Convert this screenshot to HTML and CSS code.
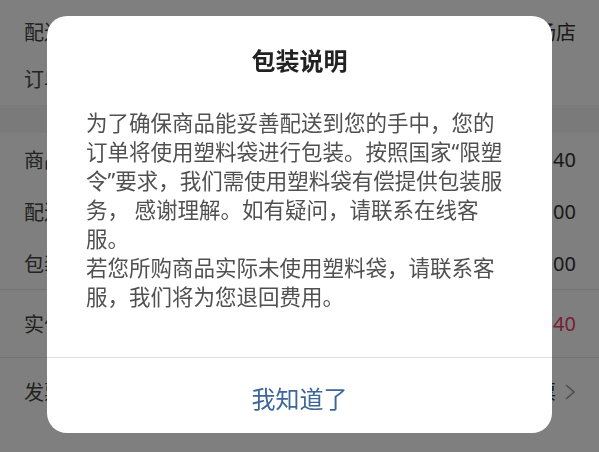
FILE: index.html
```html
<!DOCTYPE html>
<html lang="zh-CN">
<head>
<meta charset="utf-8">
<title>包装说明</title>
<link rel="stylesheet" href="styles.css">
</head>
<body>
<div class="page">
  <section class="group group-top">
    <div class="row"><span class="label">配送门店</span><span class="value">永辉超市万达广场店</span></div>
    <div class="row"><span class="label">订单编号</span><span class="value"></span></div>
  </section>
  <div class="band"></div>
  <section class="group">
    <div class="row row-mid"><span class="label">商品金额</span><span class="value">¥32.40</span></div>
    <div class="row row-mid"><span class="label">配送费</span><span class="value">¥5.00</span></div>
    <div class="row row-mid"><span class="label">包装费</span><span class="value">¥1.00</span></div>
    <div class="row row-big sep"><span class="label">实付金额</span><span class="value red">¥38.40</span></div>
    <div class="row row-big sep"><span class="label">发票信息</span>
      <span class="value"><span>不开发票</span>
        <svg class="chev" width="12" height="18" viewBox="0 0 12 18"><polyline points="2,2 10,9 2,16" fill="none" stroke="#999" stroke-width="1.6"/></svg>
      </span>
    </div>
  </section>
</div>

<div class="mask">
  <div class="dialog">
    <h2 class="title">包装说明</h2>
    <div class="body">
      <p>为了确保商品能妥善配送到您的手中，您的订单将使用塑料袋进行包装。按照国家“限塑令”要求，我们需使用塑料袋有偿提供包装服务， 感谢理解。如有疑问，请联系在线客服。</p>
      <p>若您所购商品实际未使用塑料袋，请联系客服，我们将为您退回费用。</p>
    </div>
    <div class="actions">
      <button class="btn" type="button">我知道了</button>
    </div>
  </div>
</div>
</body>
</html>
```

FILE: styles.css
```css
html, body {
  margin: 0;
  padding: 0;
  background: #ffffff;
  font-family: "Noto Sans", "Noto Sans CJK SC", sans-serif;
}

.page {
  width: 599px;
  height: 452px;
  overflow: hidden;
  background: #ffffff;
}

.group-top {
  padding-top: 8px;
  padding-bottom: 3px;
}

.band {
  height: 28px;
  background: #f4f4f4;
}

.row {
  display: flex;
  justify-content: space-between;
  align-items: center;
  height: 47px;
  padding: 0 23px 0 24px;
  font-size: 20px;
  color: #444444;
}

.row-mid {
  height: 52px;
}

.row-big {
  height: 67px;
}

.sep {
  border-top: 1px solid #e8e8e8;
}

.value {
  display: flex;
  align-items: center;
  gap: 8px;
  color: #333333;
}

.red {
  color: #f0406a;
}

.chev {
  display: block;
}

.mask {
  position: fixed;
  inset: 0;
  background: rgba(0, 0, 0, 0.5);
  display: flex;
  align-items: center;
  justify-content: center;
  padding-bottom: 3px;
  box-sizing: border-box;
}

.dialog {
  width: 505px;
  background: #ffffff;
  border-radius: 20px;
  padding-top: 30px;
  box-sizing: border-box;
  overflow: hidden;
}

.title {
  margin: 0;
  text-align: center;
  font-size: 24px;
  line-height: 30px;
  font-weight: 700;
  color: #222222;
}

.body {
  margin-top: 31.5px;
  padding: 0 39px 46.5px 39px;
  font-size: 21.5px;
  line-height: 29px;
  color: #505050;
}

.body p {
  margin: 0;
}

.actions {
  border-top: 1px solid #e2e2e2;
}

.btn {
  display: block;
  width: 100%;
  height: 75px;
  border: 0;
  background: transparent;
  font-family: "Noto Sans", "Noto Sans CJK SC", sans-serif;
  font-size: 24px;
  color: #3d679a;
  padding: 0;
  padding-top: 3px;
}
```
